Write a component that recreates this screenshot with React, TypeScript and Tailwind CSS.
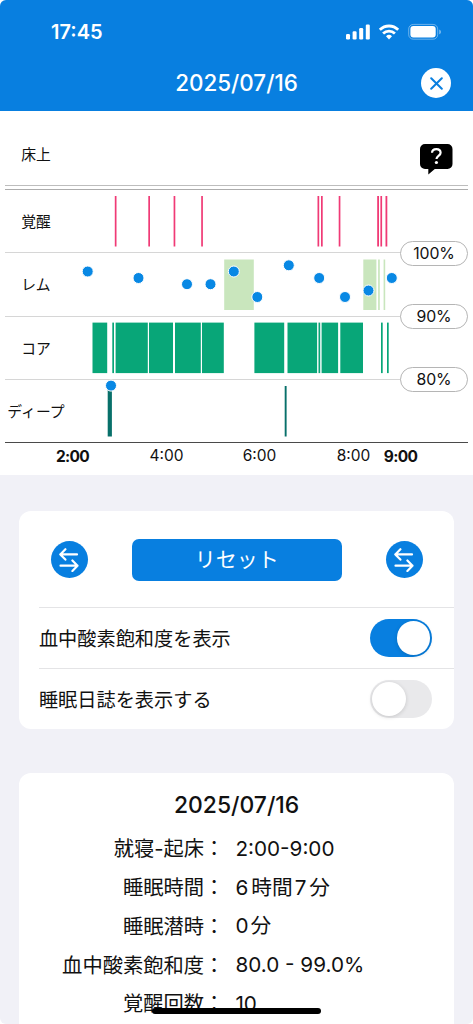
import { useState, type ReactNode } from "react";
import clsx from "clsx";

type Span = [number, number];

const STAGES: { label: string; color: string; top: number; spans: Span[] }[] = [
  {
    label: "覚醒",
    color: "#f03a76",
    top: 85,
    spans: [
      [114.8, 116.5],
      [148.3, 150],
      [173.6, 175.3],
      [201.2, 202.9],
      [317.5, 319.2],
      [321, 322.7],
      [338.7, 340.4],
      [377.2, 379],
      [380.4, 382.1],
      [385.5, 387.3],
    ],
  },
  {
    label: "レム",
    color: "#c9e6bd",
    top: 148.5,
    spans: [
      [224.2, 253.8],
      [363.3, 376.4],
      [378.1, 379.8],
      [383.6, 385.2],
    ],
  },
  {
    label: "コア",
    color: "#08a678",
    top: 211.6,
    spans: [
      [92.5, 107.2],
      [112.3, 114],
      [115.6, 147.8],
      [149, 173],
      [175, 200.8],
      [202, 223.8],
      [254.4, 284.2],
      [287.5, 317.1],
      [318.5, 320.2],
      [321.6, 338.1],
      [340.3, 363],
      [381, 382.7],
      [387, 388.7],
    ],
  },
  {
    label: "ディープ",
    color: "#08706a",
    top: 275,
    spans: [
      [107.7, 111.9],
      [284.7, 286.6],
    ],
  },
];

const OXYGEN: [number, number][] = [
  [87.7, 160.5],
  [138.5, 167],
  [187, 173.2],
  [210.5, 173.2],
  [233.8, 160.5],
  [257.3, 186],
  [288.8, 154.3],
  [319.2, 167],
  [345, 186],
  [368.5, 179.5],
  [391.8, 167],
  [111, 274.6],
];

const SUMMARY: { label: string; value: ReactNode }[] = [
  { label: "就寝-起床", value: "2:00-9:00" },
  {
    label: "睡眠時間",
    value: (
      <>
        6<span className="ml-[3px] mr-[2px]">時間</span>7<span className="ml-[3px]">分</span>
      </>
    ),
  },
  {
    label: "睡眠潜時",
    value: (
      <>
        0<span className="ml-[2px]">分</span>
      </>
    ),
  },
  { label: "血中酸素飽和度", value: "80.0 - 99.0%" },
  { label: "覚醒回数", value: "10" },
];

const StatusIcons = () => (
  <svg width="96" height="18" viewBox="0 0 96 18" fill="#fff">
    <rect x="0" y="11" width="4" height="5.5" rx="1.2" />
    <rect x="6.6" y="8.3" width="4" height="8.2" rx="1.2" />
    <rect x="13.2" y="5" width="4" height="11.5" rx="1.2" />
    <rect x="19.8" y="1.5" width="4" height="15" rx="1.2" />
    <g fill="none" stroke="#fff" strokeWidth="2.8">
      <path d="M33.8 6.8C39 1.7 47 1.7 52.2 6.8" />
      <path d="M37.1 10.4C40.4 7.3 45.6 7.3 48.9 10.4" />
    </g>
    <path d="M43 16.4l-3-3.1a4.3 4.3 0 0 1 6 0z" />
    <rect x="62.7" y="1.4" width="29" height="14.8" rx="4.6" fill="none" stroke="#fff" strokeOpacity=".4" />
    <rect x="64.4" y="3.1" width="25.3" height="11.3" rx="3" />
    <path d="M93.2 6.4c2.4.8 2.4 4 0 4.8z" fillOpacity=".45" />
  </svg>
);

const SwapButton = () => (
  <button className="flex size-[37px] items-center justify-center rounded-full bg-[#087fe0]">
    <svg width="20" height="24" viewBox="0 0 20 24" fill="none" stroke="#fff" strokeWidth="2.2" strokeLinecap="round" strokeLinejoin="round">
      <path d="M18 6.4H1.3M6.400 1.200 1.300 6.400l5.100 5.200" />
      <path d="M1.500 17.700h17M13.400 12.500l5.100 5.200-5.100 5.200" />
    </svg>
  </button>
);

const Toggle = ({ on, onChange }: { on: boolean; onChange: () => void }) => (
  <button
    role="switch"
    aria-checked={on}
    onClick={onChange}
    className={clsx("flex h-[38px] w-[62px] items-center rounded-full px-[2px]", on ? "justify-end bg-[#087fe0]" : "justify-start bg-[#e9e9eb]")}
  >
    <span className="size-[33.5px] rounded-full bg-white shadow-[0_1px_4px_rgba(0,0,0,0.15)]" />
  </button>
);

const SleepChart = () => (
  <section className="relative h-[364px] bg-white text-[14.8px]">
    <div className="mx-[5px] flex h-[75px] items-center border-b border-[#bdbdbd] pr-[15px] pt-[14px]">
      <span className="w-[62px] pt-[1px] text-center">床上</span>
      <svg className="ml-auto mt-[9px]" width="33" height="32" viewBox="0 0 33 32">
        <path d="M5 0h22.5a5 5 0 0 1 5 5v15a5 5 0 0 1-5 5H14.8L8.3 30.500V25H5a5 5 0 0 1-5-5V5a5 5 0 0 1 5-5z" />
        <path d="M12 8.800c.1-2.400 1.800-3.700 4.300-3.700 2.600 0 4.300 1.400 4.300 3.600 0 3.200-4.100 3.200-4.100 6.400" fill="none" stroke="#fff" strokeWidth="2.200" />
        <circle cx="16.400" cy="18.500" r="1.600" fill="#fff" />
      </svg>
    </div>
    <div className="mx-[5px] mt-[3px] border-t border-[#adadad]">
      {STAGES.map((stage, i) => (
        <div key={stage.label} className={clsx("flex h-[63.3px] items-center border-b", i === 3 ? "border-[#4a4a4a]" : "border-[#d6d6d6]")}>
          <span className="w-[62px] whitespace-nowrap pt-[2px] text-center">{stage.label}</span>
        </div>
      ))}
    </div>

    <svg className="absolute left-0 top-0" width="473" height="364" viewBox="0 0 473 364">
      {STAGES.map((stage) =>
        stage.spans.map(([from, to]) => (
          <rect key={from} x={from} y={stage.top} width={to - from} height="50.500" fill={stage.color} />
        ))
      )}
      {OXYGEN.map(([x, y]) => (
        <circle key={x} cx={x} cy={y} r="5.500" fill="#0888e4" stroke="#fff" strokeWidth="1" />
      ))}
    </svg>

    <div className="absolute right-[5px] top-[129.500px] flex flex-col gap-[38.300px]">
      {["100%", "90%", "80%"].map((level) => (
        <span key={level} className="flex h-[25px] w-[68px] items-center justify-center rounded-full border border-[#b5b5b5] bg-white pt-[1px] text-[15.800px] tracking-[-0.1px]">
          {level}
        </span>
      ))}
    </div>

    <div className="flex pl-[42px] text-[15.500px] leading-[25px]">
      <span className="w-[61px] pt-[1px] text-center font-bold tracking-[-0.7px]">2:00</span>
      <span className="ml-[33px] w-[61px] text-center">4:00</span>
      <span className="ml-[32px] w-[61px] text-center">6:00</span>
      <span className="ml-[33px] w-[61px] text-center">8:00</span>
      <span className="-ml-[14px] w-[61px] pt-[1px] text-center font-bold tracking-[-0.7px]">9:00</span>
    </div>
  </section>
);

const App = () => {
  const [showOxygen, setShowOxygen] = useState(true);
  const [showDiary, setShowDiary] = useState(false);

  return (
    <div className="h-[1024px] w-[473px] overflow-hidden bg-white">
      <div className="relative h-full overflow-hidden rounded-[6px] bg-[#f1f1f7] font-['Inter','Noto_Sans_CJK_JP',sans-serif] text-[#111]">
        <header className="h-[111px] bg-[#087fe0] text-white">
          <div className="flex h-[56px] items-center justify-between pl-[51px] pr-[31px] pt-[7px]">
            <span className="text-[20px] font-semibold">17:45</span>
            <StatusIcons />
          </div>
          <div className="relative flex h-[54px] items-center justify-center">
            <h1 className="text-[22.400px] font-medium">2025/07/16</h1>
            <button className="absolute right-[22px] top-[12px] flex size-[30px] items-center justify-center rounded-full bg-white">
              <svg width="13" height="13" viewBox="0 0 13 13" stroke="#087fe0" strokeWidth="2" strokeLinecap="round">
                <path d="M1.200 1.200l10.600 10.600M11.800 1.200 1.200 11.800" />
              </svg>
            </button>
          </div>
        </header>

        <SleepChart />

        <section className="ml-[19.400px] mt-[36px] h-[218px] w-[434.400px] rounded-[12px] bg-white text-[19.200px]">
          <div className="flex h-[96px] items-center justify-between pl-[31.300px] pr-[31px] pt-[1px]">
            <SwapButton />
            <button className="h-[42px] w-[210px] rounded-[7px] bg-[#087fe0] pt-[1px] text-[21px] text-white">リセット</button>
            <SwapButton />
          </div>
          <div className="ml-[19.500px] flex h-[61px] items-center justify-between border-t border-[#e4e4e6] pr-[21.500px]">
            <span className="pt-[3px]">血中酸素飽和度を表示</span>
            <Toggle on={showOxygen} onChange={() => setShowOxygen(!showOxygen)} />
          </div>
          <div className="ml-[19.500px] flex h-[61px] items-center justify-between border-t border-[#e4e4e6] pr-[21.500px]">
            <span className="pt-[3px]">睡眠日誌を表示する</span>
            <Toggle on={showDiary} onChange={() => setShowDiary(!showDiary)} />
          </div>
        </section>

        <section className="ml-[19.400px] mt-[44px] h-[300px] w-[434.400px] rounded-[12px] bg-white pt-[13px]">
          <h2 className="h-[43px] text-center text-[22.900px] font-medium leading-[38px]">2025/07/16</h2>
          {SUMMARY.map(({ label, value }) => (
            <div key={label} className="flex h-[38.800px] items-center text-[20.300px]">
              <span className="w-[205px] whitespace-nowrap pt-[2px] text-right">{label}：</span>
              <span className="ml-[11px] text-[20.700px]">{value}</span>
            </div>
          ))}
        </section>

        <div className="absolute bottom-[10px] left-[152px] h-[6px] w-[169px] rounded-full bg-black" />
      </div>
    </div>
  );
};

export default App;
